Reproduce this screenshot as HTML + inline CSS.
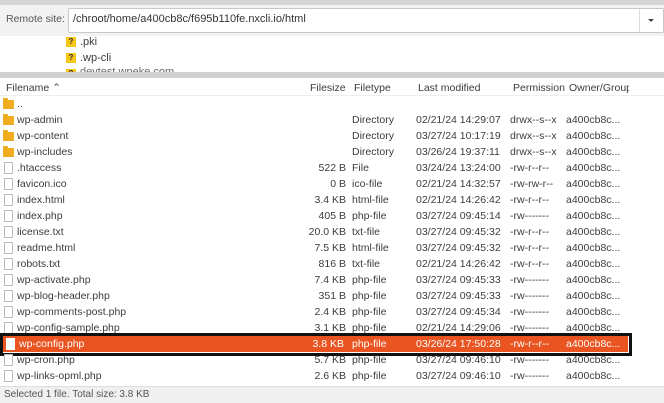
<!DOCTYPE html>
<html><head><meta charset="utf-8"><style>
*{margin:0;padding:0;box-sizing:border-box}
body{width:664px;height:403px;overflow:hidden;background:#fff;font-family:"Liberation Sans",sans-serif;font-size:10.5px;color:#3c3c3c;position:relative}
.a{position:absolute;white-space:nowrap}
.row{position:absolute;left:0;width:632px;height:16px;line-height:16px}
.row span{position:absolute;top:0}
.n{left:17px}.s{right:286px;text-align:right}.t{left:352px}.m{left:416px}.p{left:510px}.o{left:566px}
.fold{position:absolute;left:3px;top:4px;width:11px;height:9px;background:#f0ac20;border-radius:1px}
.fold:before{content:"";position:absolute;left:0;top:-2px;width:5px;height:3px;background:#f0ac20;border-radius:1px 1px 0 0}
.file{position:absolute;left:4px;top:2px;width:9px;height:12px;border:1px solid #bbb;background:#fff}
.sel{background:#e95420;color:#fff}
.sel .file{border-color:#fff}
.q{position:absolute;left:66px;width:10px;height:10px;background:#f5c518;font-size:8px;line-height:10px;text-align:center;color:#333;font-weight:bold}
</style></head><body>
<div class="a" style="left:0;top:0;width:664px;height:5px;background:#d4d4d4"></div>
<div class="a" style="left:0;top:5px;width:664px;height:31px;background:#f2f2f2"></div>
<div class="a" style="left:6px;top:13px;font-size:10.5px;color:#555">Remote site:</div>
<div class="a" style="left:68px;top:8px;width:596px;height:25px;background:#fff;border:1px solid #c8c8c8;border-radius:2px"></div>
<div class="a" style="left:73px;top:13px;font-size:11px;color:#333">/chroot/home/a400cb8c/f695b110fe.nxcli.io/html</div>
<div class="a" style="left:639px;top:9px;width:1px;height:23px;background:#ddd"></div>
<div class="a" style="left:648px;top:19px;width:0;height:0;border-left:3px solid transparent;border-right:3px solid transparent;border-top:3px solid #444"></div>
<div class="q" style="top:37px">?</div><div class="a" style="left:80px;top:36px;font-size:11px">.pki</div>
<div class="q" style="top:53px">?</div><div class="a" style="left:80px;top:52px;font-size:11px">.wp-cli</div>
<div class="q" style="top:69px;height:4px;overflow:hidden">?</div><div class="a" style="left:80px;top:66px;height:6px;overflow:hidden;font-size:11px;color:#666">devtest.wpeke.com</div>
<div class="a" style="left:0;top:72px;width:664px;height:6px;background:#d0d0d0"></div>
<div class="a" style="left:0;top:78px;width:664px;height:18px;background:#fff;border-bottom:1px solid #eee"></div>
<div class="a" style="left:6px;top:82px">Filename &#8963;</div>
<div class="a" style="left:310px;top:82px">Filesize</div>
<div class="a" style="left:354px;top:82px">Filetype</div>
<div class="a" style="left:418px;top:82px">Last modified</div>
<div class="a" style="left:513px;top:82px">Permission</div>
<div class="a" style="left:569px;top:82px;width:60px;overflow:hidden">Owner/Group</div>
<div id="rows"></div>
<div class="row" style="top:96px"><i class="fold"></i><span class="n">..</span></div>
<div class="row" style="top:112px"><i class="fold"></i><span class="n">wp-admin</span><span class="t">Directory</span><span class="m">02/21/24 14:29:07</span><span class="p">drwx--s--x</span><span class="o">a400cb8c...</span></div>
<div class="row" style="top:128px"><i class="fold"></i><span class="n">wp-content</span><span class="t">Directory</span><span class="m">03/27/24 10:17:19</span><span class="p">drwx--s--x</span><span class="o">a400cb8c...</span></div>
<div class="row" style="top:144px"><i class="fold"></i><span class="n">wp-includes</span><span class="t">Directory</span><span class="m">03/26/24 19:37:11</span><span class="p">drwx--s--x</span><span class="o">a400cb8c...</span></div>
<div class="row" style="top:160px"><i class="file"></i><span class="n">.htaccess</span><span class="s">522 B</span><span class="t">File</span><span class="m">03/24/24 13:24:00</span><span class="p">-rw-r--r--</span><span class="o">a400cb8c...</span></div>
<div class="row" style="top:176px"><i class="file"></i><span class="n">favicon.ico</span><span class="s">0 B</span><span class="t">ico-file</span><span class="m">02/21/24 14:32:57</span><span class="p">-rw-rw-r--</span><span class="o">a400cb8c...</span></div>
<div class="row" style="top:192px"><i class="file"></i><span class="n">index.html</span><span class="s">3.4 KB</span><span class="t">html-file</span><span class="m">02/21/24 14:26:42</span><span class="p">-rw-r--r--</span><span class="o">a400cb8c...</span></div>
<div class="row" style="top:208px"><i class="file"></i><span class="n">index.php</span><span class="s">405 B</span><span class="t">php-file</span><span class="m">03/27/24 09:45:14</span><span class="p">-rw-------</span><span class="o">a400cb8c...</span></div>
<div class="row" style="top:224px"><i class="file"></i><span class="n">license.txt</span><span class="s">20.0 KB</span><span class="t">txt-file</span><span class="m">03/27/24 09:45:32</span><span class="p">-rw-r--r--</span><span class="o">a400cb8c...</span></div>
<div class="row" style="top:240px"><i class="file"></i><span class="n">readme.html</span><span class="s">7.5 KB</span><span class="t">html-file</span><span class="m">03/27/24 09:45:32</span><span class="p">-rw-r--r--</span><span class="o">a400cb8c...</span></div>
<div class="row" style="top:256px"><i class="file"></i><span class="n">robots.txt</span><span class="s">816 B</span><span class="t">txt-file</span><span class="m">02/21/24 14:26:42</span><span class="p">-rw-r--r--</span><span class="o">a400cb8c...</span></div>
<div class="row" style="top:272px"><i class="file"></i><span class="n">wp-activate.php</span><span class="s">7.4 KB</span><span class="t">php-file</span><span class="m">03/27/24 09:45:33</span><span class="p">-rw-------</span><span class="o">a400cb8c...</span></div>
<div class="row" style="top:288px"><i class="file"></i><span class="n">wp-blog-header.php</span><span class="s">351 B</span><span class="t">php-file</span><span class="m">03/27/24 09:45:33</span><span class="p">-rw-------</span><span class="o">a400cb8c...</span></div>
<div class="row" style="top:304px"><i class="file"></i><span class="n">wp-comments-post.php</span><span class="s">2.4 KB</span><span class="t">php-file</span><span class="m">03/27/24 09:45:34</span><span class="p">-rw-------</span><span class="o">a400cb8c...</span></div>
<div class="row" style="top:320px"><i class="file"></i><span class="n">wp-config-sample.php</span><span class="s">3.1 KB</span><span class="t">php-file</span><span class="m">02/21/24 14:29:06</span><span class="p">-rw-------</span><span class="o">a400cb8c...</span></div>
<div class="row sel" style="top:336px;left:2px;width:626px"><i class="file"></i><span class="n">wp-config.php</span><span class="s" style="right:284px">3.8 KB</span><span class="t" style="left:350px">php-file</span><span class="m" style="left:414px">03/26/24 17:50:28</span><span class="p" style="left:508px">-rw-r--r--</span><span class="o" style="left:564px">a400cb8c...</span></div>
<div class="a" style="left:0;top:333px;width:632px;height:23px;border:3px solid #111"></div>
<div class="row" style="top:352px"><i class="file"></i><span class="n">wp-cron.php</span><span class="s">5.7 KB</span><span class="t">php-file</span><span class="m">03/27/24 09:46:10</span><span class="p">-rw-------</span><span class="o">a400cb8c...</span></div>
<div class="row" style="top:368px"><i class="file"></i><span class="n">wp-links-opml.php</span><span class="s">2.6 KB</span><span class="t">php-file</span><span class="m">03/27/24 09:46:10</span><span class="p">-rw-------</span><span class="o">a400cb8c...</span></div>
<div class="a" style="left:0;top:386px;width:664px;height:17px;background:#f0f0f0;border-top:1px solid #ddd"></div>
<div class="a" style="left:4px;top:389px;font-size:10px;color:#555">Selected 1 file. Total size: 3.8 KB</div>
</body></html>
